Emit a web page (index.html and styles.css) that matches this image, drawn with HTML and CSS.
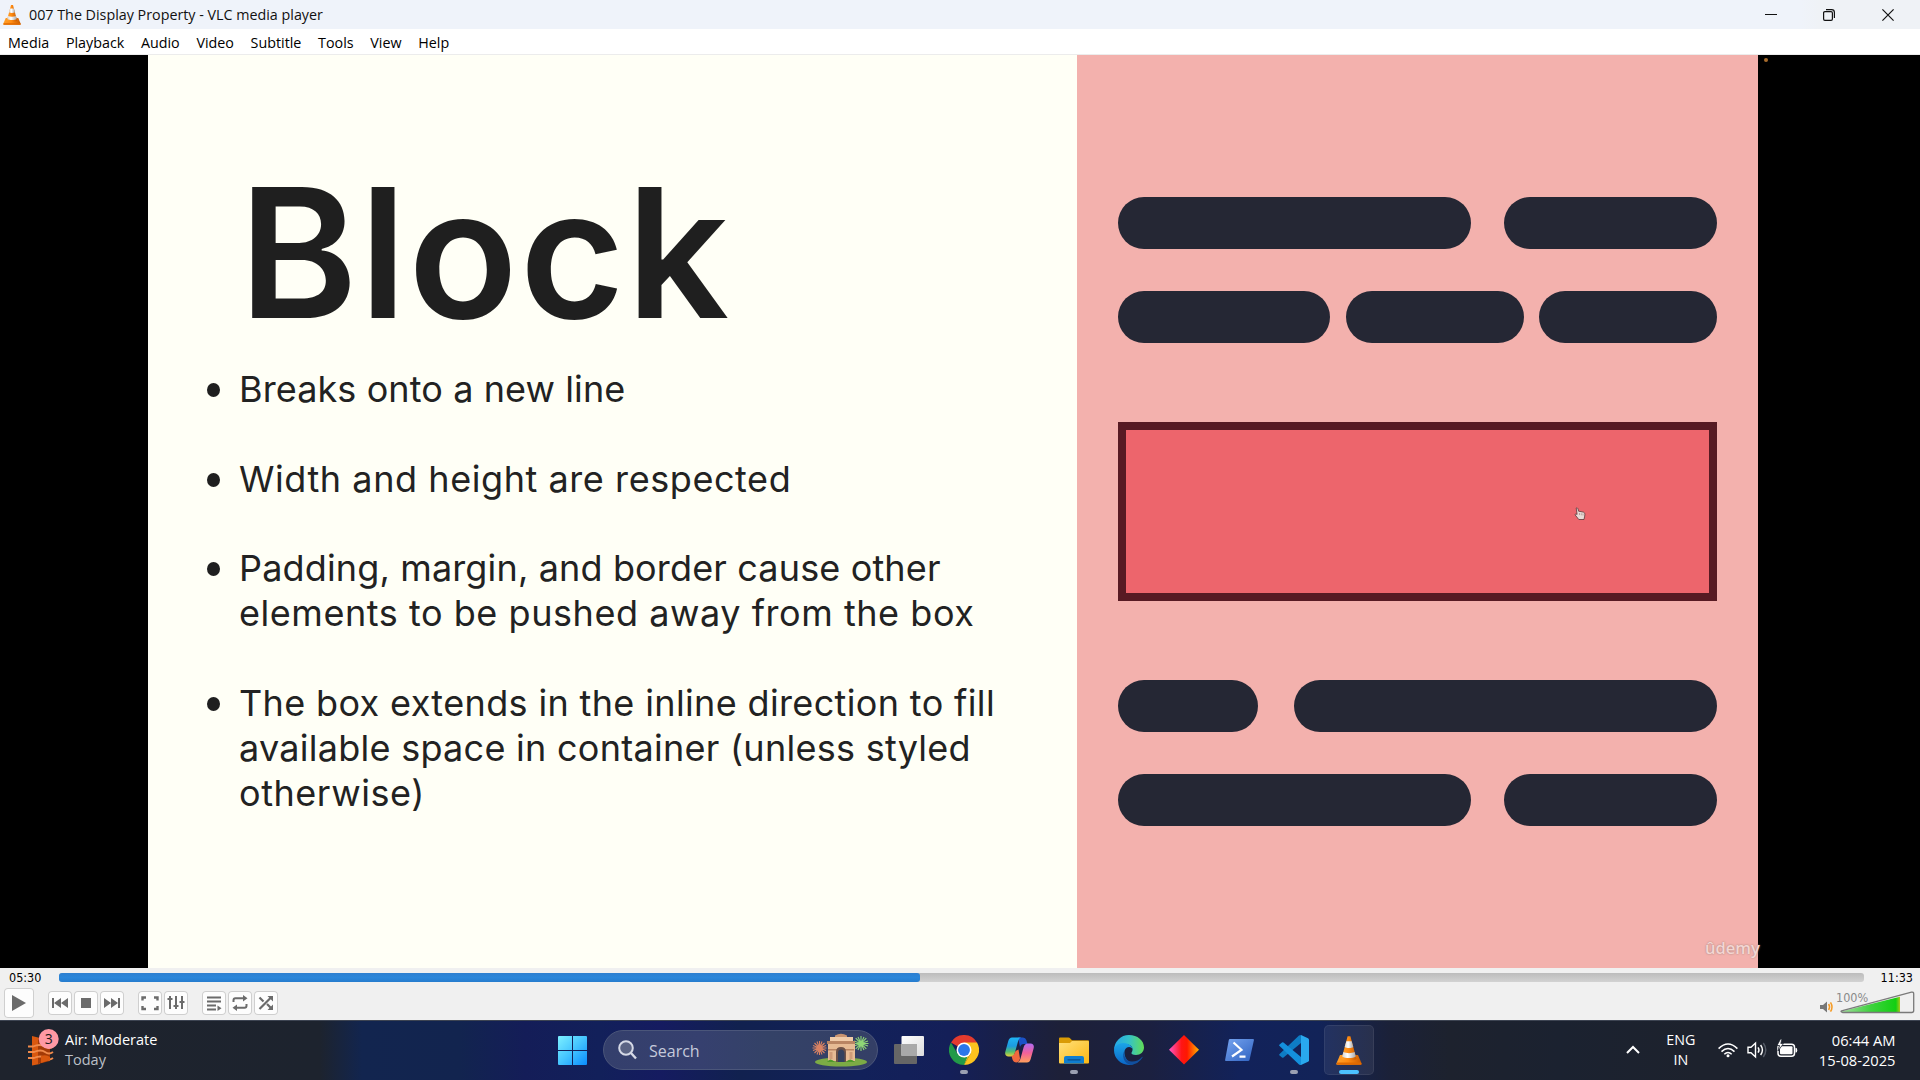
FILE: index.html
```html
<!DOCTYPE html>
<html lang="en">
<head>
<meta charset="utf-8">
<title>007 The Display Property - VLC media player</title>
<link rel="stylesheet" href="styles.css">
</head>
<body>
<svg class="defs" width="0" height="0">
  <defs>
    <linearGradient id="cone-o" x1="0" x2="1"><stop offset="0" stop-color="#ffa12b"/><stop offset=".45" stop-color="#ff8b12"/><stop offset="1" stop-color="#c85a00"/></linearGradient>
    <linearGradient id="cone-w" x1="0" x2="1"><stop offset="0" stop-color="#d5d5d5"/><stop offset=".4" stop-color="#fff"/><stop offset="1" stop-color="#a9a9a9"/></linearGradient>
    <symbol id="cone" viewBox="0 0 26 30">
      <path d="M4 20h18l3.6 8.5a.9.9 0 0 1-.8 1.2H1.2a.9.9 0 0 1-.8-1.2z" fill="url(#cone-o)"/>
      <path d="M1 27.6h24l.5 1.4-.6.8H1.100l-.6-.8z" fill="#e06a00"/>
      <path d="M11.600 1.200h2.800L20.500 24c-3 2.200-12 2.200-15 0z" fill="url(#cone-o)"/>
      <path d="M10.300 6.200h5.400l1.600 5.700c-2 1.300-6.600 1.300-8.600 0z" fill="url(#cone-w)"/>
      <path d="M7.400 17c3 1.500 8.200 1.500 11.200 0l1.200 4.600c-3.200 2-10.400 2-13.600 0z" fill="url(#cone-w)"/>
    </symbol>
  </defs>
</svg>

<header class="titlebar">
  <svg class="app-icon" width="18" height="21"><use href="#cone"/></svg>
  <span class="title">007 The Display Property - VLC media player</span>
  <div class="win-buttons">
    <svg width="12" height="12" viewBox="0 0 12 12"><path d="M0 5.500h12" stroke="#111" fill="none"/></svg>
    <svg width="12" height="12" viewBox="0 0 12 12" fill="none" stroke="#111" stroke-width="1.200"><rect x=".6" y="2.600" width="8.800" height="8.800" rx="1.300"/><path d="M3 .7h5.600a2.800 2.800 0 0 1 2.800 2.800V9"/></svg>
    <svg width="12" height="12" viewBox="0 0 12 12"><path d="M.4.4l11.200 11.200M11.600.4.4 11.600" stroke="#111" stroke-width="1.200"/></svg>
  </div>
</header>

<nav class="menubar">
  <span>Media</span><span>Playback</span><span>Audio</span><span>Video</span><span>Subtitle</span><span>Tools</span><span>View</span><span>Help</span>
</nav>

<main class="stage">
  <section class="slide-text">
    <h1>Block</h1>
    <ul>
      <li><span class="l1">Breaks onto a new line</span></li>
      <li><span class="l2">Width and height are respected</span></li>
      <li><span class="l3">Padding, margin, and border cause other</span><span class="l4">elements to be pushed away from the box</span></li>
      <li><span class="l5">The box extends in the inline direction to fill</span><span class="l6">available space in container (unless styled</span><span class="l7">otherwise)</span></li>
    </ul>
  </section>
  <section class="diagram">
    <div class="row wide-narrow"><i></i><i></i></div>
    <div class="row thirds"><i></i><i></i><i></i></div>
    <div class="block-box">
      <svg class="cursor" width="12" height="14" viewBox="0 0 12 14"><path d="M2.200 1c1-.6 1.600.2 1.800 1l.6 2.200 4.800.9c1.400.5 1.700 2 1.300 4L10 12.500H4.800L1.200 8c-.4-1 .5-1.400 1.900-.6z" fill="#e9dcd8" stroke="#5c3638" stroke-width=".8"/><path d="M5.500 6v2M7.300 6.300v2M9 6.500v2" stroke="#9a7a7a" stroke-width=".6"/></svg>
    </div>
    <div class="row narrow-wide"><i></i><i></i></div>
    <div class="row wide-narrow"><i></i><i></i></div>
    <span class="watermark">ûdemy</span>
  </section>
  <span class="rec-dot"></span>
</main>

<section class="controls">
  <div class="seek">
    <span class="elapsed">05:30</span>
    <div class="track"><div class="fill"></div></div>
    <span class="total">11:33</span>
  </div>
  <div class="buttons">
    <div class="btn play"><svg width="30" height="30" viewBox="0 0 30 30"><path d="M8 7l14 8-14 8z" fill="#6b6b6b"/></svg></div>
    <div class="group">
      <div class="btn"><svg viewBox="0 0 24 24"><path d="M4 7h2v10H4zM13 7v10l-7-5zM20 7v10l-7-5z" fill="#6b6b6b"/></svg></div>
      <div class="btn"><svg viewBox="0 0 24 24"><path d="M7 7h10v10H7z" fill="#6b6b6b"/></svg></div>
      <div class="btn"><svg viewBox="0 0 24 24"><path d="M18 7h2v10h-2zM11 7v10l7-5zM4 7v10l7-5z" fill="#6b6b6b"/></svg></div>
    </div>
    <div class="group">
      <div class="btn"><svg viewBox="0 0 24 24"><path d="M4.500 9.500V6.500H8M16 6.500h3.500v3M19.500 15v3H16M8 18H4.500v-3" fill="none" stroke="#6b6b6b" stroke-width="2.400"/></svg></div>
      <div class="btn"><svg viewBox="0 0 24 24"><path d="M6 5v13M12 5v13M18 5v13" stroke="#6b6b6b" stroke-width="2"/><path d="M3.500 8h5M9.500 15h5M15.500 11h5" stroke="#6b6b6b" stroke-width="2.200"/></svg></div>
    </div>
    <div class="group">
      <div class="btn"><svg viewBox="0 0 24 24"><path d="M5 6.500h14M5 10.500h14M5 14.500h9M5 18.500h9" stroke="#6b6b6b" stroke-width="2.100"/><path d="M15.500 14.500l4 2.800-4 2.700z" fill="#6b6b6b"/></svg></div>
      <div class="btn"><svg viewBox="0 0 24 24"><path d="M5.500 11V9.200c0-1.200.7-1.900 1.900-1.900H16M18.500 13v1.800c0 1.200-.7 1.900-1.900 1.900H8" fill="none" stroke="#6b6b6b" stroke-width="2"/><path d="M15 4l4.500 3.300L15 10.500zM9 13.500l-4.500 3.200L9 20z" fill="#6b6b6b"/></svg></div>
      <div class="btn"><svg viewBox="0 0 24 24"><path d="M5.500 6.500L9.500 10.500M13 13l4 4M5.500 18L17 6.500" fill="none" stroke="#6b6b6b" stroke-width="2.200"/><path d="M13.500 5H19v5.500zM13.500 19H19v-5.500z" fill="#6b6b6b"/></svg></div>
    </div>
    <div class="volume">
      <svg width="96" height="26" viewBox="0 0 96 26">
        <defs><linearGradient id="vol" x1="0" x2="1"><stop offset="0" stop-color="#a6dca0"/><stop offset=".5" stop-color="#3fd23f"/><stop offset=".93" stop-color="#12cf12"/><stop offset="1" stop-color="#a9c91c"/></linearGradient></defs>
        <path d="M1 14h3l4-3.500v11L4 18H1z" fill="#777"/>
        <path d="M9.600 13q2 3 0 6M11.500 11.300q3 4.700 0 9.400" fill="none" stroke="#f59a23" stroke-width="1.500"/>
        <path d="M22 20.500L81 5.800V21.500H23z" fill="url(#vol)"/>
        <path d="M22.500 19.800L92.500 1.200q2.200-.5 2.200 1.600V19.500q0 2-2 2H23.500q-2.300-.8-1-1.700z" fill="none" stroke="#7a7a7a" stroke-width="1.300"/>
        <text x="17" y="11" class="vol-text">100%</text>
      </svg>
    </div>
  </div>
</section>

<footer class="taskbar">
  <div class="widget">
    <svg width="31" height="37" viewBox="0 0 31 37">
      <path d="M4 7l8 2v26l-8 1.500z" fill="#d9580f"/><path d="M10 9.500h12v22.500l-12 3z" fill="#a33a07"/>
      <path d="M0 17.500h5q7-3 12 0t8 0M0 23h6q7-3 11 0t8 0M0 29h6q7-3 11 0t8 0" fill="none" stroke="#f08a4b" stroke-width="1.800"/>
      <path d="M13 27q5-2 9 1v3l-9 3z" fill="#d9580f"/>
      <circle cx="20.700" cy="10" r="10" fill="#ff99a4"/>
      <text x="20.700" y="15" class="badge-text">3</text>
    </svg>
    <div class="weather"><span>Air: Moderate</span><span class="dim">Today</span></div>
  </div>

  <svg class="start" width="29" height="29" viewBox="0 0 29 29">
    <defs><linearGradient id="win" x1="0" y1="0" x2="1" y2="1"><stop offset="0" stop-color="#7df0ff"/><stop offset=".5" stop-color="#44c4ff"/><stop offset="1" stop-color="#0a8cff"/></linearGradient></defs>
    <path d="M1 0h13v14H0V1q0-1 1-1zM15 0h13q1 0 1 1v13H15zM0 15h14v14H1q-1 0-1-1zM15 15h14v13q0 1-1 1H15z" fill="url(#win)"/>
  </svg>

  <div class="search">
    <svg width="19" height="20" viewBox="0 0 19 20" fill="none" stroke="#d5d9e6" stroke-width="2"><circle cx="8" cy="8" r="6.800" fill="#5a6384"/><path d="M13 13l5 5.500" stroke-width="2.400"/></svg>
    <span>Search</span>
    <svg class="gate" width="57" height="34" viewBox="0 0 57 34">
      <g stroke="#d98263" stroke-width="1.100"><path d="M7.500 8v14M.5 15h14M2.500 10l10 10M12.500 10l-10 10M5 8.500l5 13M10 8.500l-5 13M1 12.500l13 5M1 17.500l13-5"/></g>
      <g stroke="#8fd676" stroke-width="1.100"><path d="M49 3v15M41.500 10.500h15M43.700 5.200l10.600 10.600M54.300 5.200L43.700 15.800M46 4l6 13M52 4l-6 13M42 8l14 5M42 13l14-5"/></g>
      <ellipse cx="29" cy="29" rx="26" ry="4.500" fill="#7cab45"/>
      <path d="M16 10h27v18H16z" fill="#e6bb94"/><path d="M15 8h28v3H15zM16 16h26v1.500H16z" fill="#b98563"/>
      <path d="M18 4h23v4H18z" fill="#f0cba8"/><path d="M23 2.500q6-3.500 12 0V4H23z" fill="#c99470"/>
      <path d="M24 29V19q0-5 5-5t5 5v10z" fill="#6b5148"/><path d="M26 29V20q0-3.500 3-3.500t3.500 3.500v9z" fill="#33415f"/>
      <path d="M17.500 19h3v7h-3zM37.500 19h3v7h-3z" fill="#cf9c79"/>
      <path d="M15 29q3-5 8 0zM34 29q4-5 9 0z" fill="#4f9a2b"/>
    </svg>
  </div>

  <div class="apps">
    <div class="app">
      <svg width="30" height="28" viewBox="0 0 30 28"><defs><linearGradient id="tv" x1="0" y1="0" x2="1" y2="1"><stop offset="0" stop-color="#fff"/><stop offset="1" stop-color="#dcdcdc"/></linearGradient></defs><rect y="8" width="23" height="20" rx="1" fill="#666"/><rect x="7.500" width="22.500" height="20" rx="1" fill="url(#tv)"/><path d="M7.500 8H23v12H7.500z" fill="#a9a9a9"/></svg>
    </div>
    <div class="app running">
      <svg width="30" height="30" viewBox="0 0 48 48"><path d="M24 24L3.200 12A24 24 0 0 1 44.800 12z" fill="#e33b2e"/><path d="M24 12h20.800A24 24 0 0 1 24 48l10.400-18z" fill="#fcc31e"/><path d="M3.200 12l10.400 18L24 36l3.700-1L24 48A24 24 0 0 1 3.200 12z" fill="#229a48"/><path d="M24 48l10.400-18H24z" fill="#fcc31e"/><path d="M13.600 30L24 36l5.700-1.500L24 48z" fill="#229a48"/><circle cx="24" cy="24" r="12" fill="#fff"/><circle cx="24" cy="24" r="9.500" fill="#2a77ea"/></svg>
    </div>
    <div class="app">
      <svg width="29" height="26" viewBox="0 0 29 26"><defs>
        <linearGradient id="cp1" x1="0" y1="0" x2="0" y2="1"><stop offset="0" stop-color="#1fb5f5"/><stop offset=".45" stop-color="#1c9be0"/><stop offset=".75" stop-color="#55bd6d"/><stop offset="1" stop-color="#e8d23a"/></linearGradient>
        <linearGradient id="cp2" x1="0" y1="0" x2="0" y2="1"><stop offset="0" stop-color="#b06bf2"/><stop offset=".5" stop-color="#f2619a"/><stop offset="1" stop-color="#ffa05c"/></linearGradient></defs>
        <path d="M13 .5h5q2.500 0 3.300 2.500L22.500 7h-4q-2.500 0-3.500 3z" fill="#1b52c8"/>
        <path d="M7 .5h9q-2 .6-2.800 3.200L9.800 16q-1 3.500-4 3.500H3.500Q-.8 19 .4 14.500L3.300 4Q4.300.5 7 .5z" fill="url(#cp1)"/>
        <path d="M10.500 14l3-1.500 1.500 9q-.6 3.500-3.500 4-3 0-4-3L6.500 19q2.800-.5 4-5z" fill="#f0693e"/>
        <path d="M22 25.500h-9.500q2-.6 2.800-3.200L18.700 10q1-3.500 4-3.500h2.800q4.300.5 3.100 5l-2.900 10.500q-1 3.500-3.700 3.500z" fill="url(#cp2)"/></svg>
    </div>
    <div class="app running">
      <svg width="30" height="27" viewBox="0 0 30 27"><defs><linearGradient id="fo" x1="0" y1="0" x2="1" y2="1"><stop offset="0" stop-color="#ffe07a"/><stop offset="1" stop-color="#fcb813"/></linearGradient></defs><path d="M0 1.500Q0 .5 1 .5h8.500q1 0 1.800 1L13 3.200h16q1 0 1 1V10H0z" fill="#d99b05"/><path d="M0 6h11l2-2h16q1 0 1 1v20.500q0 1-1 1H1q-1 0-1-1z" fill="url(#fo)"/><path d="M5 26.500V21q0-2 2-2h16q2 0 2 2v5.500z" fill="#0f7ed0"/><path d="M9 22.800h12" stroke="#0b4f8c" stroke-width="1.300" stroke-linecap="round"/></svg>
    </div>
    <div class="app">
      <svg width="30" height="30" viewBox="0 0 30 30"><defs><linearGradient id="ed1" x1="0" x2="1"><stop offset="0" stop-color="#24a6e8"/><stop offset=".5" stop-color="#35c2c8"/><stop offset="1" stop-color="#62dd55"/></linearGradient><linearGradient id="ed2" x1="0" y1="0" x2="0" y2="1"><stop offset="0" stop-color="#1ba5e8"/><stop offset="1" stop-color="#0b66c8"/></linearGradient></defs>
        <path d="M0 15A15 15 0 0 1 15 0c8.500 0 15 5.500 15 12.500 0 4.500-3.500 7.500-8 7.500-3.500 0-5-1.200-4.500-2.300C20.500 13 17 9 11 9 5 9 1 12 0 15z" fill="url(#ed1)"/>
        <path d="M0 15C.5 11 4.500 8 9.500 8c6 0 9.500 4 9.500 7.500 0-2-2-3.500-4-3.500-3 0-5 3-4.500 7 .6 5 4.500 9 9.500 10Q17.500 30 15 30A15 15 0 0 1 0 15z" fill="url(#ed2)"/>
        <path d="M11 15c-2.500 5 1 11.500 7 11.500 4 0 7.500-1.500 10-4.500.5-.5.800 0 .5.600A15 15 0 0 1 17 29.900C10 29.500 7 20 11 15z" fill="#114f9e"/></svg>
    </div>
    <div class="app">
      <svg width="30" height="30" viewBox="0 0 30 30"><defs><linearGradient id="di" x1="0" x2="1"><stop offset="0" stop-color="#ff58c8"/><stop offset=".42" stop-color="#ff1515"/><stop offset=".6" stop-color="#ff1800"/><stop offset="1" stop-color="#ffb400"/></linearGradient></defs><path d="M15 0l15 14.700L15 29.500 0 14.700z" fill="url(#di)"/></svg>
    </div>
    <div class="app">
      <svg width="29" height="22" viewBox="0 0 29 22"><defs><linearGradient id="ps" x1="0" y1="0" x2="1" y2="1"><stop offset="0" stop-color="#76a4f0"/><stop offset="1" stop-color="#2f62c0"/></linearGradient></defs><path d="M5 0h23q1.200 0 .9 1.200L24.500 21q-.3 1-1.300 1H1Q-.2 22 .1 20.900L3.800 1Q4 0 5 0z" fill="url(#ps)"/><path d="M8.500 3.500l8 7.300L7 17.500M14.500 17.700h6" fill="none" stroke="#fff" stroke-width="2.200"/></svg>
    </div>
    <div class="app running">
      <svg width="30" height="30" viewBox="0 0 30 30"><path d="M22 0l7 3.200q1 .5 1 1.600v20.400q0 1.100-1 1.600L22 30z" fill="#29a9ee"/><path d="M22 0v8L4.500 22.500q-.8.6-1.500 0L.6 20.600q-1-.8 0-1.600L20 .6Q21 0 22 0z" fill="#0e7cc4"/><path d="M22 30v-8L4.500 7.500q-.8-.6-1.500 0L.6 9.400q-1 .8 0 1.600L20 29.400q1 .6 2 .6z" fill="#1490dc"/></svg>
    </div>
    <div class="app active"><svg width="26" height="30"><use href="#cone"/></svg></div>
  </div>

  <div class="tray">
    <svg class="chev" width="14" height="9" viewBox="0 0 14 9"><path d="M1 8l6-6 6 6" fill="none" stroke="#fff" stroke-width="2"/></svg>
    <div class="lang"><span>ENG</span><span>IN</span></div>
    <svg class="wifi" width="20" height="16" viewBox="0 0 20 16" fill="none" stroke="#fff" stroke-width="1.500"><path d="M.6 6.600q9.400-9.300 18.800 0M3.500 9.600q6.500-6.300 13 0M6.300 12.300q3.700-3.500 7.400 0"/><circle cx="10" cy="13.700" r="1.500" fill="#fff" stroke="none"/></svg>
    <svg class="snd" width="21" height="18" viewBox="0 0 21 18" fill="none" stroke="#fff" stroke-width="1.400"><path d="M1 6.200h3L8.500 2v14L4 11.800H1z"/><path d="M11 6.300q2 2.700 0 5.400M13.600 4q3.700 5 0 10"/><path d="M16.300 2q5 7 0 14" stroke="#555b66"/></svg>
    <svg class="bat" width="22" height="19" viewBox="0 0 22 19"><rect x="2" y="5.300" width="16.500" height="12" rx="3" fill="none" stroke="#fff" stroke-width="1.500"/><rect x="4" y="7.300" width="12.500" height="8" rx="1" fill="#fff"/><path d="M19.500 9h.7q1 0 1 2.300t-1 2.300h-.7z" fill="#fff"/><path d="M4.500 0L1 6.500h2.500L2 12l5.500-7.500H4.800L6 0z" fill="#fff" stroke="#1d232f" stroke-width=".8"/></svg>
    <div class="clock"><span>06:44 AM</span><span>15-08-2025</span></div>
  </div>
</footer>
</body>
</html>
```
FILE: styles.css
```css
* { box-sizing: border-box; }
body {
  margin: 0;
  width: 1920px;
  height: 1080px;
  overflow: hidden;
  display: flex;
  flex-direction: column;
  font: 14.3px/20px "Open Sans", "Noto Sans", sans-serif;
  color: #111;
  background: #000;
}
svg { display: block; flex: none; }
.defs { position: absolute; }

.titlebar {
  height: 29px;
  display: flex;
  align-items: center;
  padding: 0 26px 0 3px;
  background: linear-gradient(90deg, #eff3fa 0, #eff3fa 1800px, #eff2f6 1820px);
}
.app-icon { margin-right: 8px; }
.title { white-space: nowrap; }
.win-buttons { margin-left: auto; display: flex; gap: 47px; }
.win-buttons svg:nth-child(2) { margin-left: -1px; }

.menubar {
  height: 26px;
  display: flex;
  gap: 16.700px;
  padding: 4px 0 0 8px;
  background: #fff;
  border-bottom: 1px solid #ececec;
  color: #000;
}

.stage {
  position: relative;
  height: 913px;
  padding: 0 162px 0 148px;
  display: flex;
  background: #000;
}
.slide-text { width: 929px; padding: 91px 0 0 91px; background: #fffff6; color: #1f1f1f; }
h1 {
  margin: 0;
  font: 600 180px/214px Inter, sans-serif;
  letter-spacing: 1.800px;
}
ul {
  margin: 7px 0 0;
  padding: 0;
  list-style: none;
  font: 400 36px/44.840px Inter, sans-serif;
  display: flex;
  flex-direction: column;
  gap: 44.840px;
}
li { position: relative; color: #222; }
li::before {
  content: "";
  position: absolute;
  left: -32px;
  top: 16px;
  width: 13px;
  height: 14px;
  border-radius: 50%;
  background: #1f1f1f;
}
li span { display: block; white-space: nowrap; }
.l1 { letter-spacing: .1px; }
.l2 { letter-spacing: .57px; }
.l3 { letter-spacing: .15px; }
.l4 { letter-spacing: .55px; }
.l5 { letter-spacing: .36px; }
.l6 { letter-spacing: .27px; }
.l7 { letter-spacing: .55px; }

.diagram { position: relative; width: 681px; padding: 142px 41px 0; background: #f3b1ad; }
.row { display: grid; height: 52px; }
.row i { background: #252734; border-radius: 26px; }
.wide-narrow { grid-template-columns: 353px 213px; column-gap: 33px; }
.thirds { grid-template-columns: 212px 178px 178px; column-gap: 15.500px; margin-top: 42px; }
.narrow-wide { grid-template-columns: 139.500px 423px; column-gap: 36.500px; margin-top: 79px; }
.narrow-wide + .wide-narrow { margin-top: 42px; }
.block-box { margin-top: 79px; height: 179px; border: 8px solid #571a23; background: #ed656c; }
.cursor { position: absolute; left: 497px; top: 452px; }
.watermark {
  position: absolute;
  left: 628px;
  bottom: 8px;
  font: 600 16.500px/24px "Open Sans", sans-serif;
  color: #f3d6d3;
  text-shadow: 0 0 2px #a08078;
}
.rec-dot { position: absolute; left: 1764px; top: 3px; width: 4px; height: 4px; border-radius: 50%; background: #a86c2c; }

.controls { height: 52px; background: #f0f0f0; }
.seek {
  height: 20px;
  display: flex;
  align-items: center;
  padding: 0 7px 0 9px;
  font: 12.500px/14px "DejaVu Sans Condensed", "DejaVu Sans", sans-serif;
  color: #000;
}
.elapsed { width: 50px; }
.total { margin-left: auto; }
.track { width: 1805px; height: 9px; margin-top: -2px; border-radius: 3px; background: linear-gradient(#bcbcbc, #d2d2d2); overflow: hidden; }
.fill { width: 861px; height: 9px; border-radius: 0 3px 3px 0; background: linear-gradient(#2d7fd0, #2a86da 50%, #267cce); }

.buttons { display: flex; align-items: center; height: 30px; padding-left: 4px; gap: 14px; }
.group { display: flex; gap: 2px; }
.btn { width: 24px; height: 24px; border-radius: 4px; background: #fdfdfd; box-shadow: inset 0 0 0 1px #cfcfcf; }
.play { width: 30px; height: 30px; }
.volume { margin: 0 5px 0 auto; }
.volume svg { margin-top: 1px; }
.vol-text { font: 12.500px "DejaVu Sans Condensed", "DejaVu Sans", sans-serif; fill: #8a8a8a; }

.taskbar {
  height: 60px;
  display: flex;
  align-items: center;
  padding: 0 24.500px 0 28px;
  border-top: 1px solid #3d4452;
  color: #fff;
  background: linear-gradient(90deg, #1e232d 0, #1d232e 320px, #12254f 362px, #12244f 460px, #141d58 525px, #12205a 600px, #151b60 660px, #11214f 740px, #12215a 860px, #141f58 950px, #1d2038 1060px, #1b2040 1150px, #12225a 1240px, #122358 1320px, #1b2138 1390px, #1d222e 1450px, #1b2230 1560px, #1d222d 1700px, #1d222d 1920px);
}
.widget { width: 530px; display: flex; align-items: center; gap: 6px; }
.widget > svg { margin-top: -7px; }
.weather, .lang, .clock { display: flex; flex-direction: column; line-height: 20px; margin-top: -1px; }
.weather { font-size: 14.500px; }
.dim { color: #bcc0c8; }
.badge-text { font: 14px "Open Sans", sans-serif; fill: #1b1b1b; text-anchor: middle; }
.start { margin-top: -1px; }
.search {
  margin: -1px 3.500px 0 16px;
  width: 275px;
  height: 40px;
  border-radius: 20px;
  border: 1px solid #4b567a;
  background: linear-gradient(90deg, #343f6c, #36406f 35%, #344267 60%, #343f66);
  display: flex;
  align-items: center;
  padding: 0 8px 0 14px;
  font-size: 16px;
  color: #c5cadb;
}
.search span { margin: 1px 0 0 12px; }
.gate { margin-left: auto; }
.apps { display: flex; align-items: center; margin-top: -1px; }
.app { position: relative; width: 55px; height: 50px; display: flex; align-items: center; justify-content: center; }
.running::after, .active::after {
  content: "";
  position: absolute;
  bottom: 1px;
  left: 23.500px;
  width: 8px;
  height: 4px;
  border-radius: 2px;
  background: #9ba0b2;
}
.active { width: 50px; margin-left: 2.500px; border-radius: 5px; background: #ffffff12; box-shadow: inset 0 0 0 1px #ffffff12; }
.active::after { left: 15px; width: 20px; background: #4cc2ff; }
.tray { margin-left: auto; display: flex; align-items: center; }
.chev { margin-top: -2px; }
.lang { width: 30px; margin-left: 26px; text-align: center; align-items: center; }
.wifi { margin-left: 22px; margin-top: -2px; }
.snd { margin-left: 9px; margin-top: -2px; }
.bat { margin-left: 8px; margin-top: -5px; }
.clock { margin-left: 21px; font-size: 14.700px; align-items: flex-end; }
```
